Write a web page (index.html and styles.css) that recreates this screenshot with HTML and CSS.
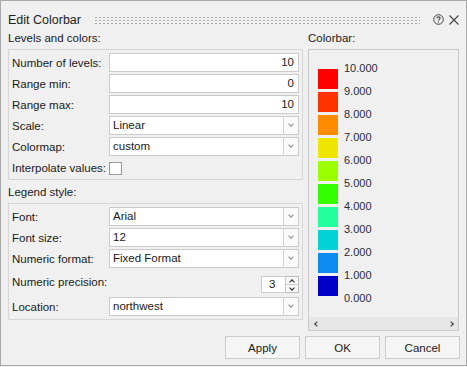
FILE: index.html
```html
<!DOCTYPE html>
<html lang="en">
<head>
    <meta charset="UTF-8">
    <title>Edit Colorbar</title>
    <link rel="stylesheet" href="styles.css">
</head>
<body>
    <div class="dialog">
        <!-- Заголовок окна -->
        <div class="titlebar">
            <span class="title">Edit Colorbar</span>
            <span class="grip"></span>
            <svg class="help" width="11" height="11" viewBox="0 0 11 11">
                <circle cx="5.5" cy="5.5" r="4.8" fill="none" stroke="#444" stroke-width="1"/>
                <path d="M3.9 4.3 C3.9 2.4 7.1 2.4 7.1 4.2 C7.1 5.3 5.5 5.4 5.5 6.6" fill="none" stroke="#444" stroke-width="1.1"/>
                <rect x="5" y="7.6" width="1.1" height="1.1" fill="#444"/>
            </svg>
            <svg class="close" width="10" height="10" viewBox="0 0 10 10">
                <path d="M0.5 0.5 L9.5 9.5 M9.5 0.5 L0.5 9.5" stroke="#444" stroke-width="1.1"/>
            </svg>
        </div>

        <div class="main">
            <!-- Левая колонка -->
            <div class="left">
                <div class="section-label">Levels and colors:</div>
                <div class="group">
                    <div class="row">
                        <label>Number of levels:</label>
                        <div class="field num">10</div>
                    </div>
                    <div class="row">
                        <label>Range min:</label>
                        <div class="field num">0</div>
                    </div>
                    <div class="row">
                        <label>Range max:</label>
                        <div class="field num">10</div>
                    </div>
                    <div class="row">
                        <label>Scale:</label>
                        <div class="combo"><span class="combo-text">Linear</span><span class="combo-btn"></span></div>
                    </div>
                    <div class="row">
                        <label>Colormap:</label>
                        <div class="combo"><span class="combo-text">custom</span><span class="combo-btn"></span></div>
                    </div>
                    <div class="row">
                        <label>Interpolate values:</label>
                        <span class="checkbox"></span>
                    </div>
                </div>

                <div class="section-label legend">Legend style:</div>
                <div class="group">
                    <div class="row">
                        <label>Font:</label>
                        <div class="combo"><span class="combo-text">Arial</span><span class="combo-btn"></span></div>
                    </div>
                    <div class="row">
                        <label>Font size:</label>
                        <div class="combo"><span class="combo-text">12</span><span class="combo-btn"></span></div>
                    </div>
                    <div class="row">
                        <label>Numeric format:</label>
                        <div class="combo"><span class="combo-text">Fixed Format</span><span class="combo-btn"></span></div>
                    </div>
                    <div class="row spin-row">
                        <label>Numeric precision:</label>
                        <div class="spin">
                            <span class="spin-text">3</span>
                            <span class="spin-btns">
                                <span class="spin-up"></span>
                                <span class="spin-down"></span>
                            </span>
                        </div>
                    </div>
                    <div class="row">
                        <label>Location:</label>
                        <div class="combo"><span class="combo-text">northwest</span><span class="combo-btn"></span></div>
                    </div>
                </div>
            </div>

            <!-- Правая колонка: шкала -->
            <div class="right">
                <div class="section-label">Colorbar:</div>
                <div class="colorbar">
                    <div class="bar-area">
                        <div class="swatches">
                            <span class="swatch" style="background:#ff0000"></span>
                            <span class="swatch" style="background:#ff3300"></span>
                            <span class="swatch" style="background:#ff8c00"></span>
                            <span class="swatch" style="background:#efe600"></span>
                            <span class="swatch" style="background:#9cff00"></span>
                            <span class="swatch" style="background:#33ff00"></span>
                            <span class="swatch" style="background:#22ff9c"></span>
                            <span class="swatch" style="background:#00d2d6"></span>
                            <span class="swatch" style="background:#0f8cf0"></span>
                            <span class="swatch" style="background:#0000c8"></span>
                        </div>
                        <div class="values">
                            <span>10.000</span>
                            <span>9.000</span>
                            <span>8.000</span>
                            <span>7.000</span>
                            <span>6.000</span>
                            <span>5.000</span>
                            <span>4.000</span>
                            <span>3.000</span>
                            <span>2.000</span>
                            <span>1.000</span>
                            <span>0.000</span>
                        </div>
                    </div>
                    <div class="hscroll">
                        <span class="arrow-left"></span>
                        <span class="arrow-right"></span>
                    </div>
                </div>
            </div>
        </div>

        <!-- Кнопки -->
        <div class="buttons">
            <button class="btn">Apply</button>
            <button class="btn">OK</button>
            <button class="btn">Cancel</button>
        </div>
    </div>
</body>
</html>
```

FILE: styles.css
```css
/* Основные стили */
body {
    margin: 0;
    padding: 0;
    background: #f0f0f0;
    font-family: "Liberation Sans", Arial, sans-serif;
    font-size: 11.5px;
    color: #1a1a1a;
    white-space: nowrap;
}

.dialog {
    width: 467px;
    height: 366px;
    box-sizing: border-box;
    border: 1px solid #a9a9a9;
    background: #f0f0f0;
    padding: 0 6px 0 7px;
}

/* Заголовок */
.titlebar {
    height: 28px;
    box-sizing: border-box;
    padding-top: 9px;
    display: flex;
    align-items: center;
}

.title {
    font-size: 12.5px;
    color: #222;
}

.grip {
    flex: 1;
    height: 8px;
    margin: 0 13px 0 13px;
    background-image: radial-gradient(circle, #a8a8a8 0.7px, transparent 0.9px);
    background-size: 4px 3px;
}

.help {
    margin-right: 5px;
}

.close {
    margin-right: 1px;
}

/* Подписи секций */
.section-label {
    height: 18px;
    line-height: 18px;
    margin-bottom: 2px;
}

.section-label.legend {
    margin-top: 3px;
}

.main {
    display: flex;
    gap: 5px;
}

.left {
    width: 295px;
}

.right {
    width: 151px;
}

/* Группы */
.group {
    border: 1px solid #d6d6d6;
    padding: 3px 3px 2px 3px;
    display: flex;
    flex-direction: column;
    gap: 2px;
}

.group + .section-label + .group {
    padding-bottom: 3px;
}

.row {
    height: 19px;
    display: flex;
    align-items: center;
}

.row label {
    width: 97px;
    flex: none;
}

.field {
    flex: 1;
    height: 19px;
    box-sizing: border-box;
    border: 1px solid #cbcbcb;
    background: #fff;
    line-height: 17px;
    padding: 0 4px;
}

.field.num {
    text-align: right;
}

.combo {
    flex: 1;
    height: 19px;
    box-sizing: border-box;
    border: 1px solid #cbcbcb;
    background: #fff;
    display: flex;
}

.combo-text {
    flex: 1;
    line-height: 17px;
    padding-left: 3px;
}

.combo-btn {
    width: 14px;
    border-left: 1px solid #d4d4d4;
    background: #fafafa;
    position: relative;
}

.combo-btn::after {
    content: "";
    position: absolute;
    left: 5px;
    top: 5px;
    width: 3px;
    height: 3px;
    border-right: 1.5px solid #8a8a8a;
    border-bottom: 1.5px solid #8a8a8a;
    transform: rotate(45deg);
}

.checkbox {
    width: 13px;
    height: 13px;
    box-sizing: border-box;
    border: 1px solid #9a9a9a;
    background: #fff;
    margin-top: 2px;
}

/* Счётчик */
.spin-row {
    height: 25px;
    align-items: flex-start;
}

.spin-row label {
    flex: 1;
    line-height: 25px;
}

.spin {
    margin-top: 6px;
    display: flex;
    height: 17px;
}

.spin-text {
    width: 25px;
    box-sizing: border-box;
    border: 1px solid #cbcbcb;
    background: #fff;
    line-height: 15px;
    padding-left: 7px;
}

.spin-btns {
    width: 13px;
    display: flex;
    flex-direction: column;
    border: 1px solid #bdbdbd;
    border-left: none;
    box-sizing: border-box;
    background: #f7f7f7;
}

.spin-up,
.spin-down {
    flex: 1;
    position: relative;
}

.spin-up {
    border-bottom: 1px solid #cfcfcf;
}

.spin-up::after,
.spin-down::after {
    content: "";
    position: absolute;
    left: 4px;
    width: 3px;
    height: 3px;
    border-right: 1.5px solid #222;
    border-bottom: 1.5px solid #222;
}

.spin-up::after {
    top: 3px;
    transform: rotate(-135deg);
}

.spin-down::after {
    top: 1px;
    transform: rotate(45deg);
}

/* Шкала цветов */
.colorbar {
    height: 282px;
    box-sizing: border-box;
    border: 1px solid #c9c9c9;
    display: flex;
    flex-direction: column;
}

.bar-area {
    flex: 1;
    display: flex;
    padding: 19px 0 0 9px;
}

.swatches {
    display: flex;
    flex-direction: column;
    gap: 3px;
}

.swatch {
    width: 20px;
    height: 20px;
}

.values {
    display: flex;
    flex-direction: column;
    margin-top: -12px;
    margin-left: 6px;
    color: #2b2b3b;
    font-size: 11px;
}

.values span {
    height: 23px;
    line-height: 23px;
}

.hscroll {
    height: 13px;
    background: #e6e6e6;
    display: flex;
    justify-content: space-between;
    align-items: center;
    padding: 0 5px 0 6px;
}

.arrow-left,
.arrow-right {
    width: 3px;
    height: 3px;
    border-right: 1.5px solid #333;
    border-bottom: 1.5px solid #333;
}

.arrow-left {
    transform: rotate(135deg);
}

.arrow-right {
    transform: rotate(-45deg);
}

/* Кнопки */
.buttons {
    display: flex;
    justify-content: flex-end;
    gap: 5px;
    margin-top: 5px;
}

.btn {
    width: 75px;
    height: 23px;
    border: 1px solid #cccccc;
    background: #f5f5f5;
    font-family: "Liberation Sans", Arial, sans-serif;
    font-size: 11.5px;
    color: #1a1a1a;
    padding: 0;
}
```
